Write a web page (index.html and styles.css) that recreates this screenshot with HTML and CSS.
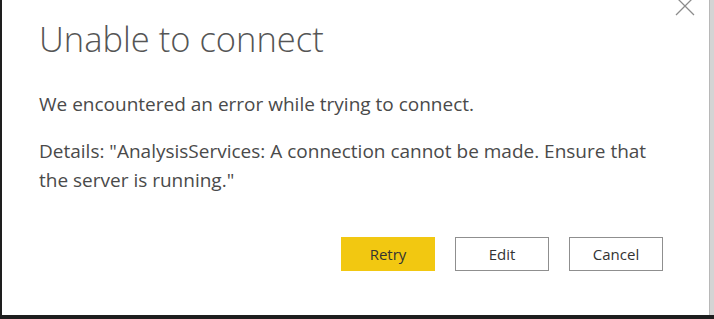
FILE: index.html
```html
<!DOCTYPE html>
<html lang="en">
<head>
<meta charset="utf-8">
<title>Unable to connect</title>
<link rel="stylesheet" href="styles.css">
</head>
<body>
<div class="screen">
  <div class="dialog">
    <button class="close" aria-label="Close">
      <svg width="20" height="20" viewBox="0 0 20 20"><path d="M1 1 L19 19 M19 1 L1 19" stroke="#8c8c8c" stroke-width="1.3" fill="none"/></svg>
    </button>
    <h1 class="title">Unable to connect</h1>
    <p class="message">We encountered an error while trying to connect.</p>
    <p class="details">Details: "AnalysisServices: A connection cannot be made. Ensure that the server is running."</p>
    <div class="actions">
      <button class="btn btn-primary">Retry</button>
      <button class="btn">Edit</button>
      <button class="btn">Cancel</button>
    </div>
  </div>
  <div class="edge"></div>
</div>
<div class="taskbar"></div>
</body>
</html>
```
FILE: styles.css
```css
html, body {
  margin: 0;
  padding: 0;
  background: #1e1e1e;
}
body {
  width: 714px;
  height: 319px;
  overflow: hidden;
  font-family: "Open Sans", "Noto Sans", sans-serif;
}
.screen {
  display: flex;
  height: 315px;
  margin-left: 2px;
}
.dialog {
  position: relative;
  flex: 1;
  background: #ffffff;
  padding: 18px 44px 0 37px;
  box-sizing: border-box;
}
.edge {
  width: 4px;
  background: #d4d4d4;
  border-left: 1px solid #b8b8b8;
}
.close {
  position: absolute;
  top: -4px;
  right: 14px;
  border: 0;
  padding: 0;
  background: none;
  width: 20px;
  height: 20px;
}
.close svg { display: block; }
.title {
  margin: 0;
  font-weight: 300;
  font-size: 34.5px;
  line-height: 42px;
  color: #555555;
}
.message {
  margin: 31px 0 0;
  font-size: 19px;
  line-height: 26px;
  color: #4a4a4a;
}
.details {
  margin: 20px 0 0;
  font-size: 19px;
  line-height: 29px;
  color: #4a4a4a;
}
.actions {
  display: flex;
  justify-content: flex-end;
  gap: 20px;
  margin-top: 42px;
  padding-right: 2px;
}
.btn {
  width: 94px;
  height: 34px;
  box-sizing: border-box;
  border: 1px solid #8f8f8f;
  background: #ffffff;
  font-family: "Open Sans", "Noto Sans", sans-serif;
  font-size: 15px;
  color: #333333;
  padding: 0;
}
.btn-primary {
  background: #f2c811;
  border-color: #f2c811;
}
.taskbar {
  height: 4px;
  background: #1e1e1e;
}
```
